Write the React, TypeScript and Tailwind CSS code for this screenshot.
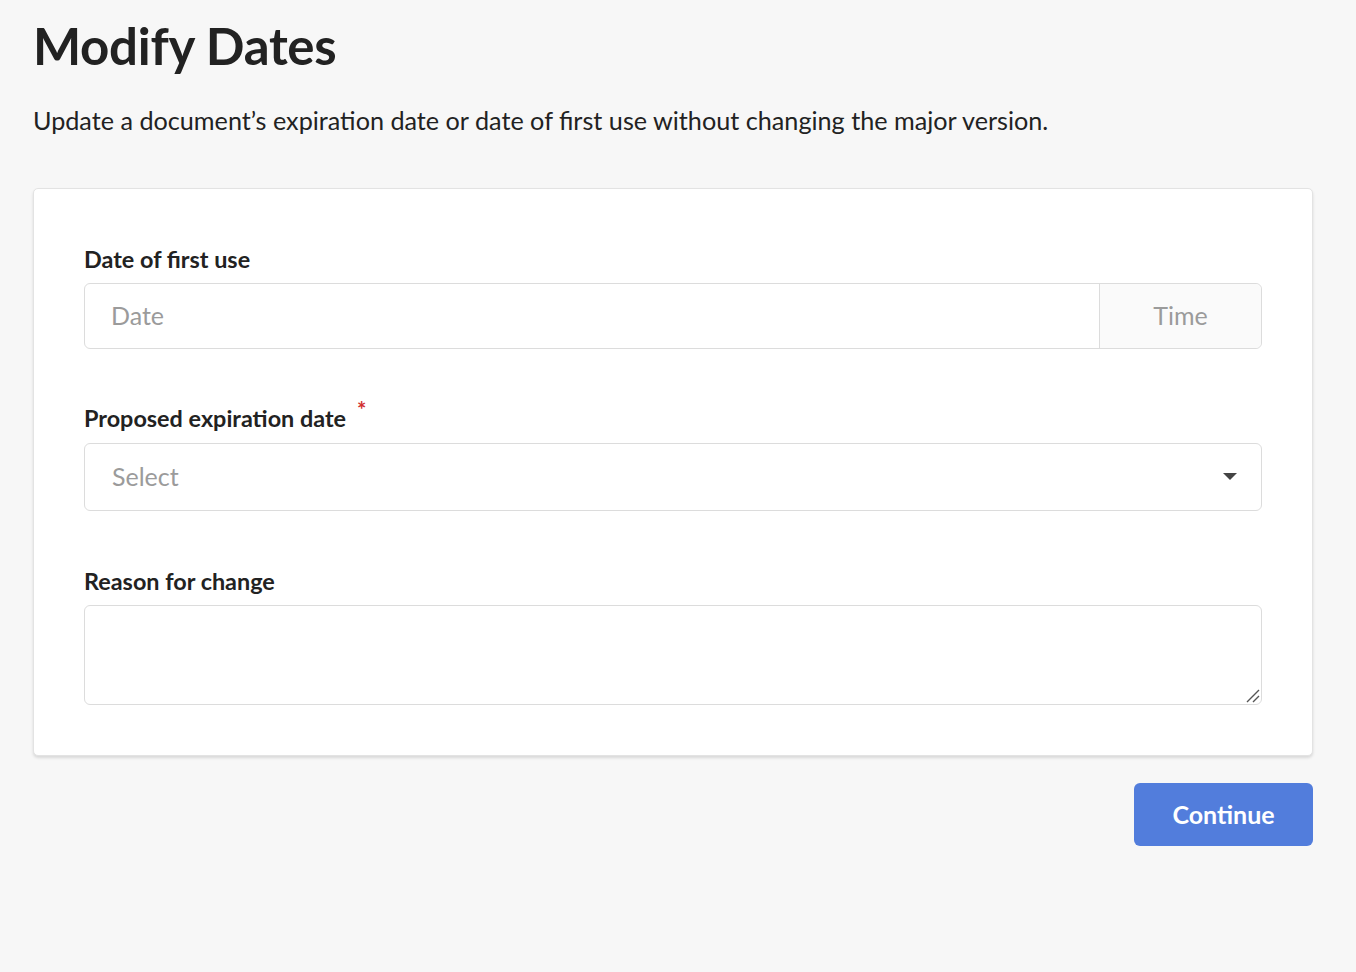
const font = { fontFamily: "Lato, 'Noto Sans', sans-serif" };

function Label({ children, required }: { children: string; required?: boolean }) {
  return (
    <div className="flex h-[30px] items-center text-[23.4px] font-bold leading-[30px] text-[#222]">
      {children}
      {required && (
        <span className="ml-[11px] -mt-[16px] text-[22px] font-bold text-[#d12f2f]">*</span>
      )}
    </div>
  );
}

export default function App() {
  return (
    <div className="min-h-[972px] bg-[#f7f7f7] px-[33px] pt-[14px]" style={font}>
      <h1 className="text-[51px] font-bold leading-[64px] tracking-[-0.3px] text-[#222]">Modify Dates</h1>
      <p className="mt-[25px] text-[25.2px] leading-[34px] text-[#222]">
        Update a document’s expiration date or date of first use without changing the major version.
      </p>

      <div className="mt-[51px] w-[1280px] rounded-[5px] border border-[#e3e3e3] bg-white px-[50px] pb-[50px] pt-[55px] shadow-[0_2px_3px_rgba(0,0,0,0.12)]">
        <Label>Date of first use</Label>
        <div className="mt-[9px] flex h-[66px] rounded-[6px] border border-[#dcdcdc]">
          <div className="flex flex-1 items-center pl-[26px] text-[25px] text-[#9b9b9b]">Date</div>
          <div className="flex w-[162px] items-center justify-center rounded-r-[6px] border-l border-[#dcdcdc] bg-[#fafafa] text-[25px] text-[#9b9b9b]">
            Time
          </div>
        </div>

        <div className="mt-[54px]">
          <Label required>Proposed expiration date</Label>
        </div>
        <div className="mt-[10px] flex h-[68px] items-center justify-between rounded-[6px] border border-[#dcdcdc] pl-[27px] pr-[24px]">
          <span className="text-[25px] text-[#9b9b9b]">Select</span>
          <svg width="14" height="8" viewBox="0 0 14 8">
            <path d="M0 0 H14 L7 7 Z" fill="#444" />
          </svg>
        </div>

        <div className="mt-[55px]">
          <Label>Reason for change</Label>
        </div>
        <div className="relative mt-[9px] h-[100px] rounded-[6px] border border-[#dcdcdc]">
          <svg className="absolute bottom-[1px] right-[1px]" width="16" height="16" viewBox="0 0 16 16">
            <path d="M15 3 L3 15 M15 9 L9 15" stroke="#555" strokeWidth="1.4" />
          </svg>
        </div>
      </div>

      <div className="mt-[27px] flex w-[1280px] justify-end">
        <button className="h-[63px] w-[179px] rounded-[6px] bg-[#527ddc] text-[25px] font-bold text-white">
          Continue
        </button>
      </div>
    </div>
  );
}
